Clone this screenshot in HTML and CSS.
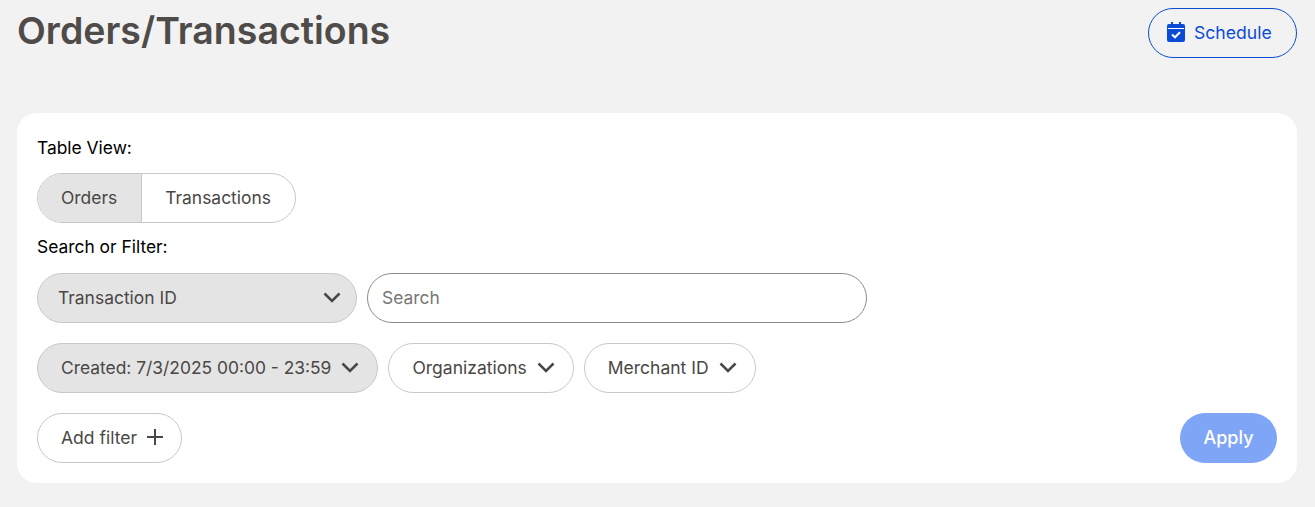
FILE: index.html
```html
<!DOCTYPE html>
<html lang="en">
<head>
    <meta charset="UTF-8">
    <title>Orders/Transactions</title>
    <link rel="stylesheet" href="styles.css">
</head>
<body>
    <div class="header">
        <h1 class="title">Orders/Transactions</h1>
        <button class="schedule-btn">
            <svg class="calendar-icon" viewBox="0 0 18 20" width="18" height="20">
                <path fill="#0a4bd6" d="M4 0h2v2h6V0h2v2h2a2 2 0 0 1 2 2v14a2 2 0 0 1-2 2H2a2 2 0 0 1-2-2V4a2 2 0 0 1 2-2h2z"/>
                <path fill="none" stroke="#fff" stroke-width="1" d="M1 6.500h16"/>
                <path fill="none" stroke="#fff" stroke-width="2" d="M5 12.500l3 2.800 5-5"/>
            </svg>
            <span>Schedule</span>
        </button>
    </div>
    <div class="card">
        <div class="label">Table View:</div>
        <div class="toggle">
            <div class="toggle-item active">Orders</div>
            <div class="toggle-item">Transactions</div>
        </div>
        <div class="label label-search">Search or Filter:</div>
        <div class="row">
            <div class="select">
                <span>Transaction ID</span>
                <svg class="chevron" viewBox="0 0 18 11" width="18" height="11"><path d="M1.500 1.500L9 9l7.500-7.500" /></svg>
            </div>
            <input class="search" type="text" placeholder="Search">
        </div>
        <div class="row filters">
            <div class="pill active">
                <span>Created: 7/3/2025 00:00 - 23:59</span>
                <svg class="chevron" viewBox="0 0 18 11" width="18" height="11"><path d="M1.500 1.500L9 9l7.500-7.500" /></svg>
            </div>
            <div class="pill">
                <span>Organizations</span>
                <svg class="chevron" viewBox="0 0 18 11" width="18" height="11"><path d="M1.500 1.500L9 9l7.500-7.500" /></svg>
            </div>
            <div class="pill">
                <span>Merchant ID</span>
                <svg class="chevron" viewBox="0 0 18 11" width="18" height="11"><path d="M1.500 1.500L9 9l7.500-7.500" /></svg>
            </div>
        </div>
        <div class="footer-row">
            <div class="pill">
                <span>Add filter</span>
                <svg class="plus" viewBox="0 0 16 16" width="16" height="16"><path d="M8 0v16M0 8h16" /></svg>
            </div>
            <button class="apply-btn">Apply</button>
        </div>
    </div>
</body>
</html>
```

FILE: styles.css
```css
* {
    box-sizing: border-box;
}

body {
    margin: 0;
    height: 507px;
    overflow: hidden;
    padding: 0 18px 0 17px;
    background-color: #f2f2f2;
    font-family: Inter, "Liberation Sans", sans-serif;
    color: #4a4745;
}

.header {
    display: flex;
    justify-content: space-between;
    align-items: flex-start;
    height: 113px;
    padding-top: 9px;
}

.title {
    margin: 0;
    font-size: 37.500px;
    line-height: 44px;
    font-weight: 560;
    color: #4f4b49;
}

.schedule-btn {
    display: flex;
    align-items: center;
    gap: 9px;
    width: 149px;
    height: 50px;
    margin-top: -1px;
    padding: 0 0 2px 18px;
    background: transparent;
    border: 1px solid #0a4bd6;
    border-radius: 25px;
    color: #0a4bd6;
    font-family: inherit;
    font-size: 17.600px;
}

.card {
    background-color: #fff;
    border-radius: 20px;
    height: 370px;
    padding: 24px 20px 20px;
}

.label {
    font-size: 17.400px;
    line-height: 22px;
    color: #000;
}

.toggle {
    display: flex;
    width: fit-content;
    height: 50px;
    margin-top: 14px;
    border: 1px solid #c8c8c8;
    border-radius: 25px;
    overflow: hidden;
}

.toggle-item {
    display: flex;
    align-items: center;
    padding: 0 24px 2px 23px;
    font-size: 17.450px;
}

.toggle-item.active {
    background-color: #e4e4e4;
    border-right: 1px solid #c8c8c8;
}

.label-search {
    margin-top: 13px;
}

.row {
    display: flex;
    gap: 10px;
    margin-top: 15px;
}

.select {
    display: flex;
    align-items: center;
    justify-content: space-between;
    width: 320px;
    height: 50px;
    padding: 0 15px 2px 20px;
    background-color: #e4e4e4;
    border: 1px solid #c8c8c8;
    border-radius: 25px;
    font-size: 17.450px;
}

.search {
    width: 500px;
    height: 50px;
    padding: 0 14px 2px;
    border: 1px solid #8c8c8c;
    border-radius: 25px;
    font-family: inherit;
    font-size: 17.450px;
    outline: none;
}

.search::placeholder {
    color: #767676;
}

.filters {
    margin-top: 20px;
}

.pill {
    display: flex;
    align-items: center;
    gap: 10px;
    width: fit-content;
    height: 50px;
    padding: 0 18px 2px 23px;
    background-color: #fff;
    border: 1px solid #c8c8c8;
    border-radius: 25px;
    font-size: 17.500px;
    white-space: nowrap;
}

.pill.active {
    background-color: #e4e4e4;
    font-size: 17.400px;
}

.chevron path,
.plus path {
    fill: none;
    stroke: #4a4745;
    stroke-width: 2.500;
}

.plus path {
    stroke-width: 2;
}

.footer-row {
    display: flex;
    justify-content: space-between;
    margin-top: 20px;
}

.apply-btn {
    width: 97px;
    height: 50px;
    padding: 0 0 2px;
    background-color: #7fa5f7;
    border: none;
    border-radius: 25px;
    color: #fff;
    font-family: inherit;
    font-size: 18px;
    font-weight: 500;
}
```
